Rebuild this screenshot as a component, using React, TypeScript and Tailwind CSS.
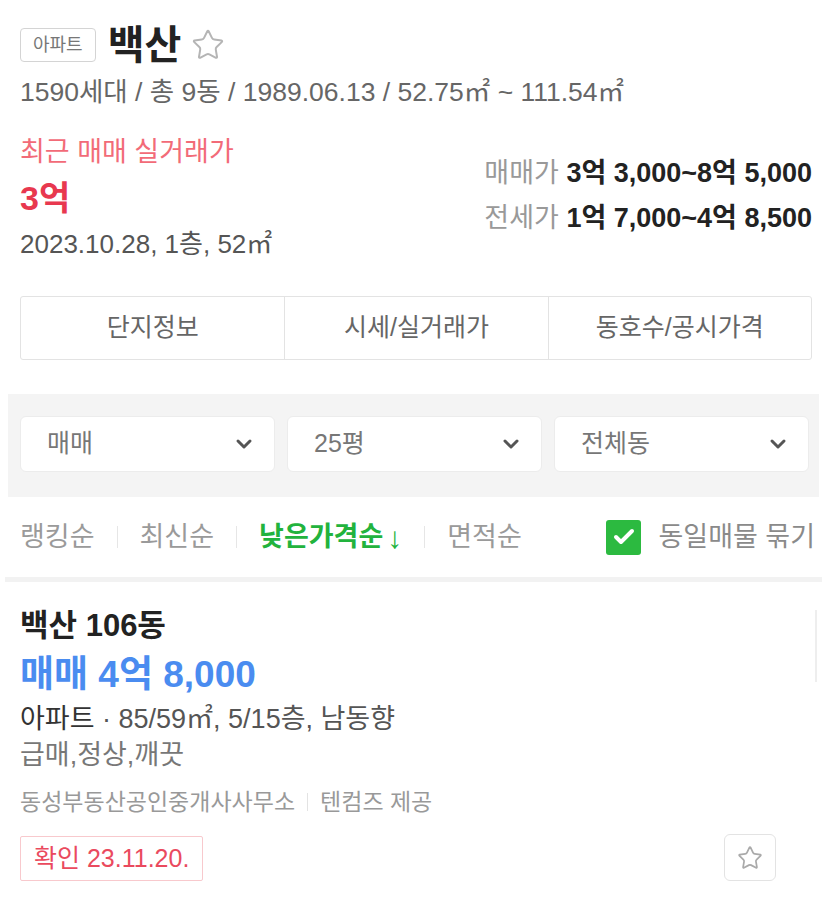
import React from "react";
import { ChevronDown, Star, Check } from "lucide-react";

function SelectBox({ label }: { label: string }) {
  return (
    <div className="flex h-[56px] flex-1 items-center justify-between rounded-[6px] border border-[#ececec] bg-white pl-[26px] pr-[18px]">
      <span className="text-[25px] text-[#777]">{label}</span>
      <ChevronDown size={24} strokeWidth={3} className="text-[#555]" />
    </div>
  );
}

function Sep() {
  return <span className="mx-[22px] h-[22px] w-px bg-[#e6e6e6]" />;
}

export default function App() {
  return (
    <div className="relative w-[827px] bg-white font-['Liberation_Sans','Noto_Sans_CJK_KR',sans-serif] pb-[24px]">
      <section className="pl-5 pr-[15px] pt-[26px]">
        <div className="flex h-[38px] items-center">
          <span className="flex h-[34px] items-center rounded-[4px] border border-[#d4d4d4] px-[12px] text-[18px] text-[#777]">
            아파트
          </span>
          <h1 className="ml-[12px] text-[40px] font-bold leading-[38px] text-[#222]">백산</h1>
          <Star size={34} strokeWidth={1.4} className="ml-[10px] text-[#b5b5b5]" />
        </div>
        <p className="mt-[11px] text-[26.5px] leading-[34px] text-[#666]">
          1590세대 / 총 9동 / 1989.06.13 / 52.75㎡ ~ 111.54㎡
        </p>

        <div className="mt-[20px] flex justify-between">
          <div className="flex flex-col">
            <span className="text-[27px] leading-[46px] text-[#f26b78]">최근 매매 실거래가</span>
            <span className="text-[34px] font-bold leading-[46px] text-[#e8384f]">3억</span>
            <span className="text-[26px] leading-[46px] text-[#555]">2023.10.28, 1층, 52㎡</span>
          </div>
          <div className="flex flex-col items-end pt-[22px]">
            <p className="text-[27px] leading-[45px]">
              <span className="text-[#999]">매매가 </span>
              <span className="font-bold text-[#222]">3억 3,000~8억 5,000</span>
            </p>
            <p className="text-[27px] leading-[45px]">
              <span className="text-[#999]">전세가 </span>
              <span className="font-bold text-[#222]">1억 7,000~4억 8,500</span>
            </p>
          </div>
        </div>

        <div className="mt-[29px] grid h-[64px] grid-cols-3 rounded-[3px] border border-[#e3e3e3]">
          <div className="flex items-center justify-center text-[25px] text-[#666]">단지정보</div>
          <div className="flex items-center justify-center border-l border-[#e3e3e3] text-[25px] text-[#666]">
            시세/실거래가
          </div>
          <div className="flex items-center justify-center border-l border-[#e3e3e3] text-[25px] text-[#666]">
            동호수/공시가격
          </div>
        </div>
      </section>

      <div className="mx-2 mt-[34px] flex gap-[12px] bg-[#f4f4f4] pb-[25px] pl-3 pr-[10px] pt-[22px]">
        <SelectBox label="매매" />
        <SelectBox label="25평" />
        <SelectBox label="전체동" />
      </div>

      <div className="flex h-[80px] items-center justify-between pl-5 pr-[12px]">
        <div className="flex items-center text-[27px] text-[#9a9a9a]">
          <span>랭킹순</span>
          <Sep />
          <span>최신순</span>
          <Sep />
          <span className="flex items-center font-bold text-[#22b33d]">
            낮은가격순<span className="ml-[4px] text-[30px] font-normal">↓</span>
          </span>
          <Sep />
          <span>면적순</span>
        </div>
        <div className="flex items-center">
          <span className="flex h-[35px] w-[35px] items-center justify-center rounded-[3px] bg-[#2cba40]">
            <Check size={24} strokeWidth={4} className="text-white" />
          </span>
          <span className="ml-[17px] text-[27px] text-[#8a8a8a]">동일매물 묶기</span>
        </div>
      </div>

      <div className="mx-[5px] h-[5px] bg-[#f2f2f2]" />

      <section className="relative px-5 pt-[24px]">
        <span className="absolute right-[10px] top-[28px] h-[72px] w-[2px] bg-[#eeeeee]" />
        <h2 className="text-[31px] font-bold leading-[40px] text-[#222]">백산 106동</h2>
        <p className="mt-[7px] text-[37px] font-bold leading-[44px] text-[#4a8cf0]">매매 4억 8,000</p>
        <p className="mt-[4px] text-[27px] leading-[36px] text-[#555]">
          <span className="text-[#333]">아파트</span> · 85/59㎡, 5/15층, 남동향
        </p>
        <p className="text-[27px] leading-[36px] text-[#777]">급매,정상,깨끗</p>
        <p className="mt-[12px] flex items-center text-[23px] leading-[34px] text-[#999]">
          <span>동성부동산공인중개사사무소</span>
          <span className="mx-[12px] h-[18px] w-px bg-[#e3e3e3]" />
          <span>텐컴즈 제공</span>
        </p>
        <div className="mt-[15px] flex items-end justify-between pr-[31px]">
          <span className="flex h-[45px] items-center rounded-[2px] border border-[#f8c9cd] px-[13px] text-[25px] text-[#ea4a5e]">
            확인 23.11.20.
          </span>
          <span className="flex h-[47px] w-[52px] items-center justify-center rounded-[6px] border border-[#e3e3e3]">
            <Star size={26} strokeWidth={1.6} className="text-[#aaa]" />
          </span>
        </div>
      </section>
    </div>
  );
}
